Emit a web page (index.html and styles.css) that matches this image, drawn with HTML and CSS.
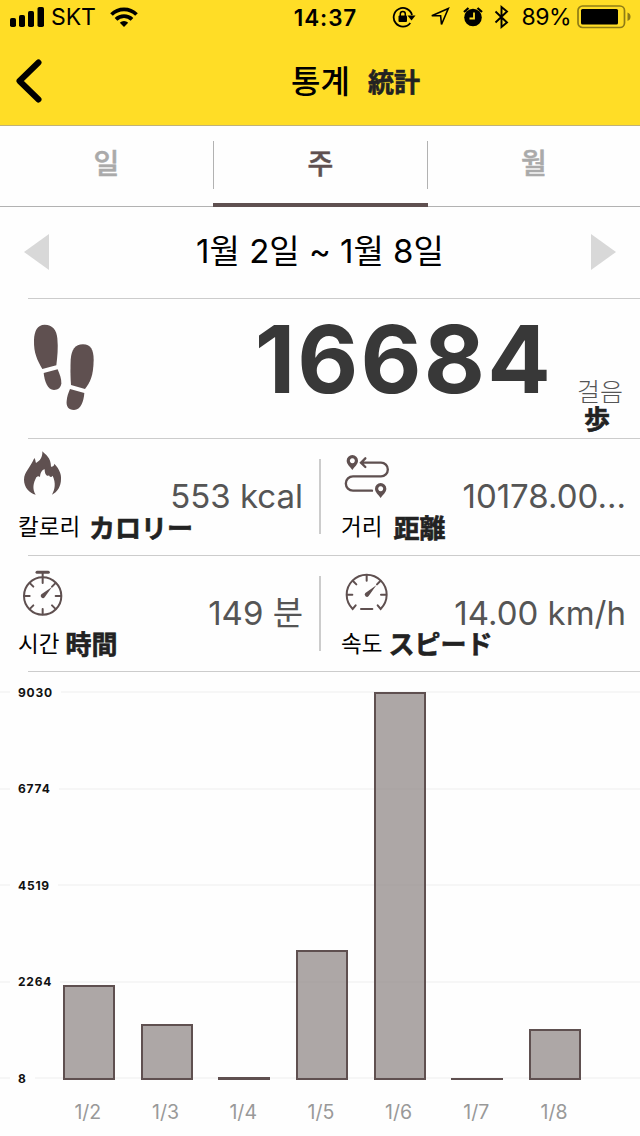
FILE: index.html
```html
<!DOCTYPE html>
<html lang="ko">
<head>
    <meta charset="UTF-8">
    <meta name="viewport" content="width=device-width, initial-scale=1.0">
    <title>통계</title>
    <link rel="stylesheet" href="styles.css">
</head>
<body>
    <header class="header">
        <div class="status-bar">
            <div class="status-left">
                <svg class="signal" width="34" height="20" viewBox="0 0 34 20">
                    <rect x="0" y="11" width="6" height="9" rx="1.8"/>
                    <rect x="9" y="8" width="6" height="12" rx="1.8"/>
                    <rect x="18" y="4" width="6" height="16" rx="1.8"/>
                    <rect x="27.500" y="0" width="6.500" height="20" rx="1.800"/>
                </svg>
                <span class="carrier">SKT</span>
                <svg class="wifi" width="28" height="20" viewBox="0 0 28 20">
                    <path d="M1.500 7.500a18 18 0 0 1 25 0M6 12.300a11.500 11.500 0 0 1 16 0" fill="none" stroke="#000" stroke-width="3.800"/>
                    <path d="M9.800 15.700a6 6 0 0 1 8.400 0L14 20z"/>
                </svg>
            </div>
            <span class="clock">14:37</span>
            <div class="status-right">
                <svg width="24" height="22" viewBox="0 0 24 22">
                    <path d="M18.300 17A9.300 9.300 0 1 1 20 9" fill="none" stroke="#000" stroke-width="1.800"/>
                    <path d="M15.500 9.500h8l-4 5z"/>
                    <rect x="6.500" y="9.500" width="8.500" height="6.500" rx="1"/>
                    <path d="M8.300 10V8a2.500 2.500 0 0 1 5 0v2" fill="none" stroke="#000" stroke-width="1.500"/>
                </svg>
                <svg class="location" width="20" height="20" viewBox="0 0 20 20">
                    <path d="M18.300 1.500L1.800 8.700h8.800L11.500 17.500z" fill="none" stroke="#000" stroke-width="1.600"/>
                </svg>
                <svg class="alarm" width="20" height="20" viewBox="0 0 20 20">
                    <circle cx="10" cy="10.500" r="8.800"/>
                    <path d="M1 5l4.500-4M19 5l-4.500-4" stroke="#000" stroke-width="2.300"/>
                    <path d="M11 5.500v6H6.500" fill="none" stroke="#ffdd26" stroke-width="1.800"/>
                </svg>
                <svg class="bluetooth" width="15" height="24" viewBox="0 0 15 24">
                    <path d="M1.500 6.500l11.500 11L7.500 22V2L13 6.500l-11.500 11" fill="none" stroke="#000" stroke-width="1.900"/>
                </svg>
                <span class="percent">89%</span>
                <svg class="battery" width="54" height="24" viewBox="0 0 54 24">
                    <rect x="1" y="1" width="46.500" height="21.500" rx="4.500" fill="none" stroke="#8f7c16" stroke-width="1.700"/>
                    <rect x="4" y="4" width="37" height="15.500" rx="1.500"/>
                    <path d="M50.500 7.500a4.500 4.500 0 0 1 0 8.500z" fill="#8f7c16"/>
                </svg>
            </div>
        </div>
        <div class="title-bar">
            <svg class="back" width="28" height="44" viewBox="0 0 28 44">
                <path d="M22.500 3.500L3.500 22l19 18.500" fill="none" stroke="#000" stroke-width="6" stroke-linecap="round" stroke-linejoin="round"/>
            </svg>
            <h1>통계</h1>
            <span class="note">統計</span>
        </div>
    </header>

    <nav class="tabs">
        <a class="tab">일</a>
        <a class="tab active">주</a>
        <a class="tab">월</a>
    </nav>

    <div class="period">
        <svg width="25" height="36" viewBox="0 0 25 36"><path d="M25 0v36L0 18z"/></svg>
        <span>1월 2일 ~ 1월 8일</span>
        <svg width="25" height="36" viewBox="0 0 25 36"><path d="M0 0v36l25-18z"/></svg>
    </div>

    <section class="steps">
        <svg class="feet" width="64" height="88" viewBox="96 54 192 264">
            <path d="M134 59C112 59 103 78 102 105C101 145 112 165 127 192L169 181C172 155 175 130 172 100C170 75 158 59 134 59Z"/>
            <path d="M131 204L173 193C180 210 184 220 184 235C183 248 174 255 162 255C142 254 134 230 131 204Z"/>
            <path d="M249 118C272 118 281 135 281 165C280 215 270 232 255 252L213 240C211 215 211 190 212 165C214 135 225 118 249 118Z"/>
            <path d="M210 252L253 264C251 290 243 314 222 315C205 315 198 303 200 288C201 275 205 264 210 252Z"/>
        </svg>
        <span class="steps-count">16684</span>
        <div class="steps-unit">
            <span>걸음</span>
            <span class="note">歩</span>
        </div>
    </section>

    <section class="stats">
        <div class="stat">
            <svg class="stat-icon" width="48" height="50" viewBox="66 30 144 150">
                <path class="fill" d="M127 37C136 47 153 55 153 83C157 84 163 81 163 74C180 92 184 108 183 120C183 142 172 160 156 167C165 150 168 132 158 110C154 116 149 114 147 109C141 114 134 107 134 91C126 92 121 102 120 114C115 110 113 112 109 115C100 132 96 150 107 167C88 162 72 145 72 122C73 98 90 88 103 57C107 62 106 67 108 72C120 66 128 55 127 37Z"/>
            </svg>
            <span class="stat-value">553 kcal</span>
            <div class="stat-label">칼로리<span class="note calorie">カロリー</span></div>
        </div>
        <div class="stat">
            <svg class="stat-icon" width="48" height="50" viewBox="66 30 144 150">
                <path d="M123 71H183a20.500 20.500 0 0 1 0 41H99a21.500 21.500 0 0 0 0 43H156M136 58L123 71l13 13" stroke-width="7"/>
                <path class="fill" fill-rule="evenodd" d="M97 93C90 82 80 76 80 65a17 17 0 0 1 34 0C114 76 104 82 97 93ZM97 58a7.500 7.500 0 1 0 .1 0Z"/>
                <path class="fill" fill-rule="evenodd" d="M182 177C175 166 165 160 165 149a17 17 0 0 1 34 0C199 160 189 166 182 177ZM182 142a7.500 7.500 0 1 0 .1 0Z"/>
            </svg>
            <span class="stat-value">10178.00...</span>
            <div class="stat-label">거리<span class="note distance">距離</span></div>
        </div>
        <div class="stat">
            <svg class="stat-icon" width="48" height="50" viewBox="66 36 144 150">
                <circle cx="128" cy="126" r="56"/>
                <path d="M111 55h34" stroke-width="9"/>
                <path d="M128 55v32M74 126h15M167 126h15M128 165v16M91 89l9 9M165 89l-9 9M91 163l9-9M165 163l-9-9"/>
                <path class="fill" d="M156 99L134 130a6.500 6.500 0 1 1-10-9Z"/>
            </svg>
            <span class="stat-value">149 분</span>
            <div class="stat-label">시간<span class="note">時間</span></div>
        </div>
        <div class="stat">
            <svg class="stat-icon" width="48" height="50" viewBox="66 36 144 150">
                <path d="M107 154l-9 11A60 60 0 1 1 182 165l-9-11M123 165h34"/>
                <path d="M140 64v16M82 122h15M183 122h15M99 81l10 10M181 81l-10 10"/>
                <path class="fill" d="M169 94L146 126a6.500 6.500 0 1 1-10-9Z"/>
            </svg>
            <span class="stat-value">14.00 km/h</span>
            <div class="stat-label">속도<span class="note">スピード</span></div>
        </div>
    </section>

    <section class="chart">
        <div class="grid-lines">
            <div class="grid-line"><span>9030</span></div>
            <div class="grid-line"><span>6774</span></div>
            <div class="grid-line"><span>4519</span></div>
            <div class="grid-line"><span>2264</span></div>
            <div class="grid-line"><span>8</span></div>
        </div>
        <div class="bars">
            <div class="bar" style="height: 95px"></div>
            <div class="bar" style="height: 56px"></div>
            <div class="bar" style="height: 3px"></div>
            <div class="bar" style="height: 130px"></div>
            <div class="bar" style="height: 388px"></div>
            <div class="bar" style="height: 2px"></div>
            <div class="bar" style="height: 51px"></div>
        </div>
        <div class="days">
            <span>1/2</span>
            <span>1/3</span>
            <span>1/4</span>
            <span>1/5</span>
            <span>1/6</span>
            <span>1/7</span>
            <span>1/8</span>
        </div>
    </section>
</body>
</html>
```
FILE: styles.css
```css
* {
    box-sizing: border-box;
}
body {
    font-family: Inter, 'Noto Sans CJK KR', sans-serif;
    margin: 0;
    height: 1136px;
    overflow: hidden;
    background-color: #fefefe;
    color: #000;
}
svg {
    display: block;
    flex: none;
}
.note {
    font-family: 'Noto Sans CJK JP', sans-serif;
    font-size: 26px;
    font-weight: 700;
    color: #222;
    -webkit-text-stroke: 0.6px #222;
}

/* header */
.header {
    height: 126px;
    background-color: #ffdd26;
    border-bottom: 1px solid #c0b278;
}
.status-bar {
    display: grid;
    grid-template-columns: 1fr auto 1fr;
    align-items: center;
    height: 33px;
    padding: 0 9px 0 10px;
    font-size: 23px;
    line-height: 33px;
}
.status-left, .status-right {
    display: flex;
    align-items: center;
}
.status-right {
    justify-content: flex-end;
}
.carrier {
    margin: 1px 0 0 7px;
    letter-spacing: -0.1px;
}
.wifi {
    margin-left: 14px;
}
.clock {
    margin: 1px -5px 0 5px;
    font-weight: 600;
    font-size: 22.5px;
    letter-spacing: 0.9px;
}
.location {
    margin-left: 14px;
}
.alarm {
    margin-left: 13px;
}
.bluetooth {
    margin-left: 11px;
}
.percent {
    margin: 1px 0 0 12px;
    letter-spacing: -0.5px;
}
.battery {
    margin-left: 6px;
}
.title-bar {
    display: flex;
    align-items: center;
    height: 92px;
    padding: 3px 0 0 16px;
}
.title-bar h1 {
    margin: 2px 0 0 247px;
    font-size: 32px;
    font-weight: 500;
    line-height: 40px;
}
.title-bar .note {
    margin-left: 18px;
}

/* tabs */
.tabs {
    display: grid;
    grid-template-columns: 213px 215px 1fr;
    height: 81px;
    border-bottom: 1px solid #b2b2b2;
}
.tab {
    position: relative;
    height: 81px;
    font-size: 28px;
    font-weight: 500;
    line-height: 77px;
    text-align: center;
    color: #aaa;
    -webkit-text-stroke: 0.5px currentColor;
}
.tab.active {
    color: #5f5050;
    border-bottom: 4px solid #5f5050;
}
.tab.active::before, .tab.active::after {
    content: "";
    position: absolute;
    top: 15px;
    left: 0;
    width: 1px;
    height: 48px;
    background-color: #b2b2b2;
}
.tab.active::after {
    left: auto;
    right: 0;
}

/* period */
.period {
    display: flex;
    align-items: center;
    justify-content: space-between;
    height: 91px;
    padding: 0 24px 2px;
    font-size: 33px;
}
.period span {
    margin-bottom: 5px;
}
.period svg {
    fill: #d8d8d8;
}

/* steps */
.steps {
    display: flex;
    height: 140px;
    margin-left: 28px;
    padding-left: 4px;
    border-top: 1px solid #ccc;
    fill: #5f5050;
}
.feet {
    margin-top: 24px;
}
.steps-count {
    width: 457px;
    text-align: right;
    font-size: 94px;
    font-weight: 700;
    line-height: 120px;
    letter-spacing: 2.2px;
    color: #383838;
}
.steps-unit {
    display: flex;
    flex-direction: column;
    align-items: center;
    margin: 81px 0 0 24px;
    font-size: 25px;
    line-height: 25px;
    font-weight: 300;
    color: #555;
}
.steps-unit .note {
    margin-left: -6px;
}

/* stats */
.stats {
    display: grid;
    grid-template-columns: 320px 320px;
    grid-template-rows: 117px 116px;
}
.stat {
    display: grid;
    grid-template-columns: 48px 1fr;
    grid-template-rows: 63px 30px;
    padding: 11px 17px 0 22px;
    background: linear-gradient(#ccc, #ccc) 28px 0 / 100% 1px no-repeat,
        linear-gradient(#ccc, #ccc) 100% 21px / 1px 75px no-repeat;
}
.stat:nth-child(even) {
    padding-right: 14px;
    background: linear-gradient(#ccc, #ccc) 0 0 / 100% 1px no-repeat,
        linear-gradient(#ccc, #ccc) 0 21px / 1px 75px no-repeat;
}
.stat-icon {
    fill: none;
    stroke: #5f5050;
    stroke-width: 6;
    stroke-linecap: round;
}
.stat-icon .fill {
    fill: #5f5050;
    stroke: none;
}
.stat-value {
    font-size: 33px;
    line-height: 40px;
    margin-top: 27px;
    text-align: right;
    white-space: nowrap;
    color: #555;
}
.stat-label {
    display: flex;
    align-items: center;
    grid-column: 1 / 3;
    margin-left: -4px;
    font-size: 22.5px;
    line-height: 30px;
    white-space: nowrap;
}
.stat-label .note {
    margin: -2px 0 0 6px;
}
.stat-label .calorie {
    margin: 0 0 0 9px;
}
.stat-label .distance {
    margin: 0 0 0 11px;
}
.stat:nth-child(even) .stat-label {
    margin-left: -1px;
}

/* chart */
.chart {
    display: grid;
    grid-template-rows: 429px 36px;
    height: 465px;
    background: linear-gradient(#ccc, #ccc) 28px 0 / 100% 1px no-repeat;
}
.grid-lines {
    grid-area: 1 / 1;
    display: flex;
    flex-direction: column;
    justify-content: space-between;
    height: 415px;
    padding-top: 13px;
}
.grid-line {
    display: flex;
    align-items: center;
    height: 16px;
    font-size: 12px;
    font-weight: 700;
    letter-spacing: 0.8px;
    color: #111;
}
.grid-line::before, .grid-line::after {
    content: "";
    width: 10px;
    height: 2px;
    background-color: #f6f6f6;
}
.grid-line::after {
    flex: 1;
}
.grid-line span {
    padding: 0 8px;
}
.bars {
    grid-area: 1 / 1;
    display: grid;
    grid-template-columns: repeat(7, 77.7px);
    align-items: end;
    justify-items: center;
    height: 409px;
    padding-left: 50px;
}
.bar {
    width: 52px;
    background-color: rgba(146, 137, 136, 0.75);
    box-shadow: inset 0 0 0 2px #5f5050;
}
.days {
    display: grid;
    grid-template-columns: repeat(7, 77.7px);
    padding-left: 49px;
    font-size: 19.5px;
    line-height: 24px;
    text-align: center;
    color: #999;
}
```
